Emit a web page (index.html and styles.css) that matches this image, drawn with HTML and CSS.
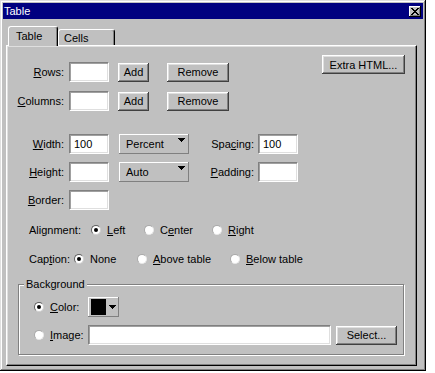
FILE: index.html
```html
<!DOCTYPE html>
<html>
<head>
<meta charset="utf-8">
<title>Table</title>
<link rel="stylesheet" href="styles.css">
</head>
<body>
<div class="dialog">
  <div class="titlebar">
    <span class="title">Table</span>
    <span class="close">
      <svg width="8" height="7" viewBox="0 0 8 7" shape-rendering="crispEdges"><path d="M0 0h2v1h-2zM6 0h2v1h-2zM1 1h2v1h-2zM5 1h2v1h-2zM2 2h4v1h-4zM3 3h2v1h-2zM2 4h4v1h-4zM1 5h2v1h-2zM5 5h2v1h-2zM0 6h2v1h-2zM6 6h2v1h-2z" fill="#000"/></svg>
    </span>
  </div>
  <div class="tabs">
    <div class="tab active">Table</div>
    <div class="tab">Cells</div>
  </div>
  <div class="panel">
    <div class="top">
      <div class="rowsgroup">
        <div class="frow">
          <label class="lbl"><u>R</u>ows:</label>
          <input class="field" type="text" value="">
          <button class="btn add">Add</button>
          <button class="btn remove">Remove</button>
        </div>
        <div class="frow">
          <label class="lbl"><u>C</u>olumns:</label>
          <input class="field" type="text" value="">
          <button class="btn add">Add</button>
          <button class="btn remove">Remove</button>
        </div>
      </div>
      <button class="btn extra">Extra HTML...</button>
    </div>
    <div class="dims">
      <div class="frow">
        <label class="lbl"><u>W</u>idth:</label>
        <input class="field" type="text" value="100">
        <div class="select"><span>Percent</span><svg class="tri" width="7" height="4" viewBox="0 0 7 4" shape-rendering="crispEdges"><path d="M0 0h7v1h-1v1h-1v1h-1v1h-1v-1h-1v-1h-1v-1h-1z" fill="#000"/></svg></div>
        <label class="lbl2">Spa<u>c</u>ing:</label>
        <input class="field" type="text" value="100">
      </div>
      <div class="frow">
        <label class="lbl"><u>H</u>eight:</label>
        <input class="field" type="text" value="">
        <div class="select"><span>Auto</span><svg class="tri" width="7" height="4" viewBox="0 0 7 4" shape-rendering="crispEdges"><path d="M0 0h7v1h-1v1h-1v1h-1v1h-1v-1h-1v-1h-1v-1h-1z" fill="#000"/></svg></div>
        <label class="lbl2"><u>P</u>adding:</label>
        <input class="field" type="text" value="">
      </div>
      <div class="frow">
        <label class="lbl"><u>B</u>order:</label>
        <input class="field" type="text" value="">
      </div>
    </div>
    <div class="radiorow first">
      <span class="rlabel align-l">Alignment:</span>
      <span class="opt w53"><span class="radio checked"></span><span class="otext"><u>L</u>eft</span></span>
      <span class="opt w68"><span class="radio"></span><span class="otext">C<u>e</u>nter</span></span>
      <span class="opt"><span class="radio"></span><span class="otext"><u>R</u>ight</span></span>
    </div>
    <div class="radiorow second">
      <span class="rlabel cap-l">Cap<u>t</u>ion:</span>
      <span class="opt w63"><span class="radio checked"></span><span class="otext">None</span></span>
      <span class="opt w93"><span class="radio"></span><span class="otext"><u>A</u>bove table</span></span>
      <span class="opt"><span class="radio"></span><span class="otext"><u>B</u>elow table</span></span>
    </div>
    <div class="group">
      <span class="legend">Background</span>
      <div class="grow">
        <span class="gopt"><span class="radio checked"></span><span class="otext"><u>C</u>olor:</span></span>
        <button class="colorbtn"><span class="swatch"></span><svg class="ctri" width="7" height="4" viewBox="0 0 7 4" shape-rendering="crispEdges"><path d="M0 0h7v1h-1v1h-1v1h-1v1h-1v-1h-1v-1h-1v-1h-1z" fill="#000"/></svg></button>
      </div>
      <div class="grow">
        <span class="gopt"><span class="radio"></span><span class="otext"><u>I</u>mage:</span></span>
        <input class="field wide" type="text" value="">
        <button class="btn select-btn">Select...</button>
      </div>
    </div>
  </div>
</div>
</body>
</html>
```
FILE: styles.css
```css
* { box-sizing: border-box; margin: 0; padding: 0; }
body {
  background: #fff;
  font-family: "Liberation Sans", Arial, sans-serif;
  font-size: 11px;
  color: #000;
}
u { text-decoration: underline; text-underline-offset: 1px; }

.dialog {
  width: 426px;
  height: 371px;
  background: #c0c0c0;
  padding: 3px;
  box-shadow: inset -1px -1px #000, inset 1px 1px #dfdfdf, inset -2px -2px #808080, inset 2px 2px #fff;
}

.titlebar {
  height: 16px;
  background: #000080;
  color: #fff;
  display: flex;
  align-items: center;
  justify-content: space-between;
  padding: 0 2px 0 1px;
}
.title { line-height: 13px; }
.close {
  width: 12px;
  height: 11px;
  background: #c0c0c0;
  box-shadow: inset -1px -1px #000, inset 1px 1px #fff, inset -2px -2px #808080;
  display: flex;
  align-items: center;
  justify-content: center;
}

.tabs {
  display: flex;
  align-items: flex-end;
  height: 19px;
  margin: 7px 0 0 3px;
  padding-left: 2px;
}
.tab {
  height: 16px;
  width: 57px;
  padding-left: 5px;
  display: flex;
  align-items: center;
  background: #c0c0c0;
  border-top: 1px solid #fff;
  border-left: 1px solid #fff;
  border-right: 1px solid #000;
  border-radius: 3px 3px 0 0;
  box-shadow: inset -1px 0 #808080;
}
.tab.active {
  width: 50px;
  height: 20px;
  padding-left: 7px;
  padding-bottom: 1px;
  margin-bottom: -1px;
  position: relative;
  z-index: 1;
}

.panel {
  margin-left: 3px;
  width: 411px;
  height: 321px;
  border-top: 1px solid #fff;
  border-left: 1px solid #fff;
  border-right: 1px solid #000;
  border-bottom: 1px solid #000;
  box-shadow: inset -1px -1px #808080, inset 1px 1px #dfdfdf;
}

.btn {
  font: inherit;
  color: #000;
  border: none;
  background: #c0c0c0;
  height: 19px;
  box-shadow: inset -1px -1px #404040, inset 1px 1px #fff, inset -2px -2px #808080, inset 2px 2px #dfdfdf;
}

.field {
  font: inherit;
  color: #000;
  width: 40px;
  height: 20px;
  background: #fff;
  border: 1px solid;
  border-color: #808080 #fff #fff #808080;
  box-shadow: inset 1px 1px #a0a0a0, inset -1px -1px #dfdfdf;
  padding: 0 0 0 4px;
  outline: none;
}

.top { display: flex; align-items: flex-start; }
.rowsgroup {
  margin-top: 16px;
  display: flex;
  flex-direction: column;
  gap: 9px;
}
.extra { width: 83px; margin: 9px 11px 0 auto; }

.frow { display: flex; align-items: center; height: 20px; }
.lbl { width: 57px; text-align: right; margin-right: 5px; }
.add { width: 31px; margin-left: 9px; }
.remove { width: 62px; margin-left: 18px; }

.dims {
  margin-top: 23px;
  display: flex;
  flex-direction: column;
  gap: 8px;
}
.select {
  width: 70px;
  height: 20px;
  margin-left: 10px;
  padding-left: 7px;
  display: flex;
  align-items: center;
  justify-content: space-between;
  box-shadow: inset -1px -1px #808080, inset 1px 1px #fff;
}
.select .tri { align-self: flex-start; margin: 4px 4px 0 0; }
.lbl2 { width: 65px; text-align: right; margin-right: 4px; }

.radiorow {
  display: flex;
  align-items: center;
  height: 14px;
  padding-left: 22px;
}
.radiorow.first { margin-top: 13px; }
.radiorow.second { margin-top: 15px; }
.align-l { width: 62px; }
.cap-l { width: 45px; }
.opt { display: flex; align-items: center; }
.w53 { width: 53px; }
.w68 { width: 68px; }
.w63 { width: 63px; }
.w93 { width: 93px; }
.otext { margin-left: 6px; }

.radio {
  width: 10px;
  height: 10px;
  border-radius: 50%;
  background: #fff;
  border: 1px solid;
  border-color: #a8a8a8 #e8e8e8 #e8e8e8 #a8a8a8;
  display: flex;
  align-items: center;
  justify-content: center;
  flex: none;
}
.radio.checked { border-color: #606060 #d0d0d0 #d0d0d0 #606060; }
.radio.checked::after {
  content: "";
  width: 4px;
  height: 4px;
  border-radius: 50%;
  background: #000;
}

.group {
  position: relative;
  margin: 18px 0 0 11px;
  width: 386px;
  height: 71px;
  border: 1px solid #808080;
  box-shadow: inset 1px 1px #fff, 1px 1px #fff;
  padding: 12px 0 0 15px;
  display: flex;
  flex-direction: column;
  gap: 8px;
}
.legend {
  position: absolute;
  top: -7px;
  left: 5px;
  padding: 0 2px;
  background: #c0c0c0;
  line-height: 13px;
}
.grow { display: flex; align-items: center; height: 20px; }
.gopt { width: 54px; display: flex; align-items: center; }
.colorbtn {
  width: 31px;
  height: 20px;
  border: none;
  background: #c0c0c0;
  box-shadow: inset -1px -1px #808080, inset 1px 1px #fff;
  display: flex;
  align-items: center;
  padding-left: 3px;
}
.swatch { width: 15px; height: 16px; background: #000; }
.ctri { margin-left: 3px; }
.field.wide { width: 243px; }
.select-btn { width: 61px; margin-left: 5px; }
```
